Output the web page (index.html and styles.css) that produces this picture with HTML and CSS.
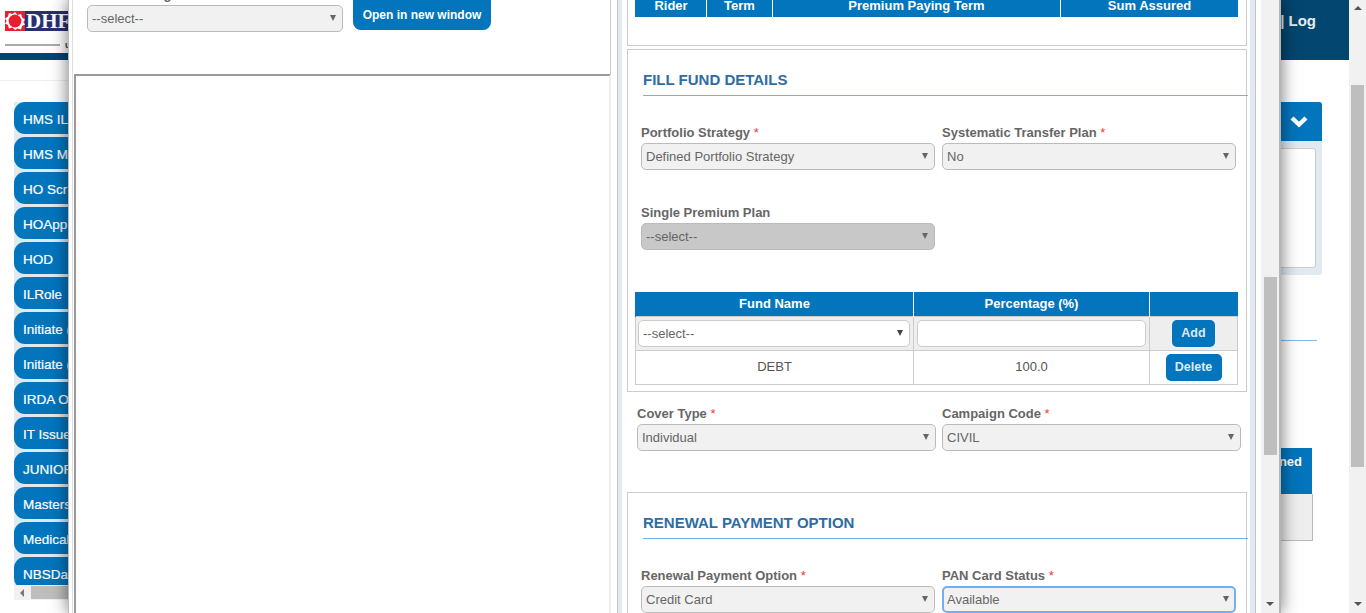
FILE: index.html
```html
<!DOCTYPE html>
<html lang="en">
<head>
    <meta charset="UTF-8">
    <title>Proposal Entry</title>
    <link rel="stylesheet" href="styles.css">
</head>
<body>

<div class="page">
    <div class="page-main">
        <div class="header">
            <div class="logo-block">
                <div class="logo">
                    <svg class="logo-mark" width="20" height="20" viewBox="0 0 20 20">
                        <rect width="20" height="20" fill="#e8202e"/>
                        <path d="M10 1l2.5 2.9 3.6-1 .9 3.6 3 1.9-1.7 2.6 1.7 2.6-3 1.4-.9 3.6-3.6-1L10 19l-2.5-2.4-3.6 1-.9-3.6-3-1.4L1.7 10 0 7.4l3-1.9.9-3.6 3.6 1z" fill="#fff"/>
                        <circle cx="10" cy="10" r="6.4" fill="#e8202e"/>
                    </svg>
                    <span class="logo-text">DHFL</span>
                </div>
                <div class="logo-tag">
                    <span class="logo-line"></span>
                    <span class="logo-word">u</span>
                </div>
            </div>
            <div class="header-user">| Log</div>
        </div>
        <div class="content">
            <div class="sidebar">
                <div class="role-list">
                    <a class="role">HMS IL</a>
                    <a class="role">HMS M</a>
                    <a class="role">HO Scr</a>
                    <a class="role">HOApp</a>
                    <a class="role">HOD</a>
                    <a class="role">ILRole</a>
                    <a class="role">Initiate (</a>
                    <a class="role">Initiate (</a>
                    <a class="role">IRDA O</a>
                    <a class="role">IT Issue</a>
                    <a class="role">JUNIOR</a>
                    <a class="role">Masters</a>
                    <a class="role">Medical</a>
                    <a class="role">NBSDa</a>
                </div>
                <div class="hscroll">
                    <span class="arrow arrow-left"></span>
                    <span class="hscroll-thumb"></span>
                </div>
            </div>
            <div class="aside">
                <div class="box">
                    <div class="box-head">
                        <svg width="18" height="13" viewBox="0 0 18 13"><path d="M2 3l7 6.5L16 3" fill="none" stroke="#fff" stroke-width="4.4"/></svg>
                    </div>
                    <div class="box-body"><div class="box-text"></div></div>
                </div>
                <div class="aside-line"></div>
                <div class="aside-table">
                    <div class="aside-th">Assigned</div>
                    <div class="aside-td"></div>
                </div>
            </div>
        </div>
    </div>
    <div class="vscroll">
        <span class="arrow arrow-up"></span>
        <span class="vscroll-thumb page-thumb"></span>
        <span class="arrow arrow-down"></span>
    </div>
</div>

<div class="modal">
    <div class="doc-pane">
        <div class="doc-top">
            <div class="doc-field">
                <label class="doc-label">Select Listing</label>
                <div class="select-wrap doc-select">
                    <select><option>--select--</option></select>
                </div>
            </div>
            <button class="btn btn-open">Open in new window</button>
        </div>
        <div class="doc-frame"></div>
    </div>

    <div class="form-pane">
        <div class="form-scroll">
            <div class="panel panel-rider">
                <table class="grid rider-grid">
                    <tr>
                        <th class="col-rider">Rider</th>
                        <th class="col-term">Term</th>
                        <th class="col-ppt">Premium Paying Term</th>
                        <th>Sum Assured</th>
                    </tr>
                </table>
            </div>

            <div class="panel panel-fund">
                <h3 class="section-title">FILL FUND DETAILS</h3>
                <div class="form-row first-row">
                    <div class="field">
                        <label>Portfolio Strategy <span class="req">*</span></label>
                        <div class="select-wrap"><select><option>Defined Portfolio Strategy</option></select></div>
                    </div>
                    <div class="field">
                        <label>Systematic Transfer Plan <span class="req">*</span></label>
                        <div class="select-wrap"><select><option>No</option></select></div>
                    </div>
                </div>
                <div class="form-row second-row">
                    <div class="field">
                        <label>Single Premium Plan</label>
                        <div class="select-wrap disabled"><select disabled><option>--select--</option></select></div>
                    </div>
                </div>
                <table class="grid fund-grid">
                    <tr>
                        <th class="col-name">Fund Name</th>
                        <th class="col-pct">Percentage (%)</th>
                        <th></th>
                    </tr>
                    <tr class="entry-row">
                        <td><div class="select-wrap white"><select><option>--select--</option></select></div></td>
                        <td><input type="text" class="pct-input"></td>
                        <td><button class="btn btn-add">Add</button></td>
                    </tr>
                    <tr class="data-row">
                        <td>DEBT</td>
                        <td>100.0</td>
                        <td><button class="btn btn-delete">Delete</button></td>
                    </tr>
                </table>
            </div>

            <div class="form-row cover-row">
                <div class="field">
                    <label>Cover Type <span class="req">*</span></label>
                    <div class="select-wrap"><select><option>Individual</option></select></div>
                </div>
                <div class="field">
                    <label>Campaign Code <span class="req">*</span></label>
                    <div class="select-wrap"><select><option>CIVIL</option></select></div>
                </div>
            </div>

            <div class="panel panel-renewal">
                <h3 class="section-title">RENEWAL PAYMENT OPTION</h3>
                <div class="form-row first-row">
                    <div class="field">
                        <label>Renewal Payment Option <span class="req">*</span></label>
                        <div class="select-wrap"><select><option>Credit Card</option></select></div>
                    </div>
                    <div class="field">
                        <label>PAN Card Status <span class="req">*</span></label>
                        <div class="select-wrap focused"><select><option>Available</option></select></div>
                    </div>
                </div>
            </div>
        </div>
    </div>

    <div class="vscroll modal-scroll">
        <span class="vscroll-thumb modal-thumb"></span>
        <span class="arrow arrow-down"></span>
    </div>
</div>

</body>
</html>
```

FILE: styles.css
```css
* {
    box-sizing: border-box;
}
html, body {
    margin: 0;
    padding: 0;
    height: 613px;
    overflow: hidden;
}
body {
    font-family: "Liberation Sans", Arial, sans-serif;
    font-size: 13px;
    color: #666;
    background-color: #fff;
}

/* page behind the modal */
.page {
    display: flex;
    height: 613px;
}
.page-main {
    flex: 1;
    min-width: 0;
}
.header {
    display: flex;
    justify-content: space-between;
    height: 60px;
    background-color: #03466f;
}
.logo-block {
    width: 300px;
    height: 53px;
    background-color: #fff;
    padding: 11px 0 0 5px;
}
.logo {
    display: flex;
    height: 20px;
}
.logo-text {
    background-color: #27306f;
    color: #fff;
    font-family: "Liberation Serif", serif;
    font-weight: bold;
    font-size: 21px;
    line-height: 21px;
    padding-left: 1px;
    width: 80px;
}
.logo-tag {
    display: flex;
    align-items: center;
    gap: 5px;
    height: 10px;
    margin-top: 9px;
    color: #444;
    font-size: 9px;
    font-weight: bold;
}
.logo-line {
    width: 55px;
    height: 2px;
    background-color: #aaa;
}
.header-user {
    padding: 12px 33px 0 0;
    color: #e6eef4;
    font-size: 15px;
    font-weight: bold;
}
.content {
    display: flex;
    justify-content: space-between;
    height: 553px;
    position: relative;
}
.sidebar {
    width: 300px;
    height: 541px;
    margin-top: 20px;
    padding: 21px 0 0 14px;
    border-top: 1px solid #eee;
}
.role-list {
    display: flex;
    flex-direction: column;
    gap: 3px;
    height: 483px;
    overflow: hidden;
    background-color: #e1e9f1;
}
.role {
    flex: none;
    height: 32px;
    padding-left: 9px;
    line-height: 35px;
    color: #fff;
    font-size: 13.5px;
    -webkit-text-stroke: 0.2px #fff;
    background-color: #0275bd;
    border-radius: 11px;
}
.hscroll {
    display: flex;
    align-items: center;
    height: 15px;
    background-color: #f1f1f1;
}
.hscroll-thumb {
    width: 200px;
    height: 13px;
    margin-left: 7px;
    background-color: #bebebe;
}
.arrow {
    display: block;
    width: 0;
    height: 0;
    border-style: solid;
    border-color: transparent;
}
.arrow-left {
    margin-left: 6px;
    border-width: 4px 4px 4px 0;
    border-right-color: #777;
}
.arrow-up {
    margin-top: 6px;
    border-width: 0 4px 4px;
    border-bottom-color: #555;
}
.arrow-down {
    margin-top: auto;
    margin-bottom: 7px;
    border-width: 4px 4px 0;
    border-top-color: #555;
}
.aside {
    width: 250px;
    margin-right: 27px;
    padding-top: 42px;
}
.box {
    height: 173px;
    border-radius: 3px;
    background-color: #e1e9f1;
}
.box-head {
    display: flex;
    justify-content: flex-end;
    align-items: center;
    height: 39px;
    padding-right: 14px;
    background-color: #0275bd;
    border-radius: 3px 3px 0 0;
}
.box-body {
    padding: 7px 6px 7px 0;
}
.box-text {
    height: 120px;
    background-color: #fff;
    border: 1px solid #ccc;
    border-radius: 3px;
}
.aside-line {
    height: 1px;
    margin: 65px 5px 0 0;
    background-color: #7dbbee;
}
.aside-table {
    margin: 107px 10px 0 0;
}
.aside-th {
    height: 46px;
    padding: 6px 10px 0 0;
    color: #fff;
    font-weight: bold;
    text-align: right;
    background-color: #0275bd;
}
.aside-td {
    height: 47px;
    margin-right: -1px;
    background-color: #eee;
    border-right: 1px solid #bbb;
    border-bottom: 1px solid #bbb;
}
.vscroll {
    display: flex;
    flex-direction: column;
    align-items: center;
    flex: none;
    width: 17px;
    height: 613px;
    background-color: #f1f1f1;
}
.vscroll-thumb {
    display: block;
    width: 13px;
    background-color: #bebebe;
}
.page-thumb {
    height: 382px;
    margin-top: 75px;
}

/* modal */
.modal {
    position: absolute;
    top: 0;
    left: 68px;
    display: flex;
    width: 1213px;
    height: 613px;
    padding-left: 3px;
    background-color: #fff;
    border-left: 1px solid #bbb;
    border-right: 2px solid #b5b5b5;
    box-shadow: 0 0 16px rgba(0, 0, 0, 0.55);
}
.doc-pane {
    flex: none;
    width: 539px;
    border-left: 1px solid #ddd;
    border-right: 1px solid #ccc;
}
.doc-top {
    display: flex;
    align-items: flex-start;
    gap: 10px;
    height: 74px;
    padding-left: 14px;
}
.doc-field {
    width: 256px;
    padding-top: 5px;
    position: relative;
}
.doc-label {
    position: absolute;
    top: -13px;
    left: 0;
    font-weight: bold;
}
.doc-select select {
    height: 28px;
    padding-left: 3px;
    font-size: 14.5px;
}
.btn {
    display: block;
    padding: 0;
    color: #fff;
    font-family: "Liberation Sans", Arial, sans-serif;
    font-size: 12px;
    font-weight: bold;
    background-color: #0275bd;
    border: none;
    border-radius: 5px;
}
.btn-open {
    width: 138px;
    height: 38px;
    margin-top: -8px;
    padding-top: 7px;
    border-radius: 8px;
}
.doc-frame {
    height: 539px;
    margin-left: 1px;
    margin-right: -1px;
    border-top: 2px solid #999;
    border-left: 2px solid #999;
    border-right: 2px solid #eee;
}
.form-pane {
    flex: none;
    width: 639px;
    height: 613px;
    margin-left: 6px;
    overflow: hidden;
    border-left: 1px solid #c4c4c4;
    border-right: 1px solid #c4c4c4;
    background-color: #e1e9f1;
    padding: 0 5px 0 4px;
}
.form-scroll {
    display: flow-root;
    height: 613px;
    padding-left: 5px;
    background-color: #fff;
}
.modal-scroll {
    width: 18px;
    margin-left: 5px;
}
.modal-thumb {
    height: 178px;
    margin-top: 277px;
}
.panel {
    width: 620px;
    border: 1px solid #ccc;
}
.panel-rider {
    height: 76px;
    margin-top: -30px;
    padding: 22px 0 0 7px;
}
.panel-fund {
    height: 343px;
    margin-top: 3px;
    padding-left: 7px;
}
.panel-renewal {
    height: 200px;
    margin-top: 41px;
}
.section-title {
    width: 605px;
    margin: 0 -1px 0 8px;
    color: #2e6da4;
    font-size: 15px;
    line-height: 16px;
    padding-bottom: 7px;
    padding-top: 22px;
    font-weight: bold;
    border-bottom: 1px solid #7aaedb;
}
.panel-renewal .section-title {
    border-bottom-color: #68b0f0;
    margin-left: 15px;
}
.form-row {
    display: grid;
    grid-template-columns: 294px 294px;
    column-gap: 7px;
}
.first-row {
    margin: 29px 0 0 6px;
}
.panel-renewal .first-row {
    margin-left: 13px;
}
.second-row {
    margin: 35px 0 0 6px;
}
.cover-row {
    grid-template-columns: 299px 299px;
    column-gap: 6px;
    margin: 14px 0 0 10px;
}
.field label {
    display: block;
    height: 15px;
    margin-bottom: 3px;
    line-height: 15px;
    font-weight: bold;
    font-size: 13px;
    color: #666;
}
.req {
    color: #e8403c;
    font-weight: normal;
}
.select-wrap {
    position: relative;
}
.select-wrap::after {
    content: "";
    position: absolute;
    top: 10px;
    right: 7px;
    border-style: solid;
    border-width: 6px 3.5px 0;
    border-color: #666 transparent transparent;
}
.select-wrap select {
    display: block;
    width: 100%;
    height: 27px;
    padding: 0 20px 0 4px;
    color: #666;
    font-family: "Liberation Sans", Arial, sans-serif;
    font-size: 13px;
    background-color: #f1f1f1;
    border: 1px solid #bbb;
    border-radius: 5px;
    appearance: none;
    opacity: 1;
}
.select-wrap.disabled select {
    background-color: #c8c8c8;
}
.select-wrap.white select {
    background-color: #fff;
    border-color: #ccc;
}
.select-wrap.white::after {
    border-top-color: #444;
}
.select-wrap.focused select {
    border: 2px solid #74aef5;
    padding-left: 3px;
}
.grid {
    table-layout: fixed;
    width: 603px;
    border-collapse: collapse;
}
.grid th {
    height: 24px;
    padding: 0;
    color: #fff;
    font-size: 13px;
    font-weight: bold;
    text-align: center;
    background-color: #0275bd;
    border-left: 1px solid #fff;
}
.grid th:first-child {
    border-left: 1px solid #0275bd;
}
.col-rider {
    width: 71px;
}
.col-term {
    width: 66px;
}
.col-ppt {
    width: 288px;
}
.col-name {
    width: 278px;
}
.col-pct {
    width: 236px;
}
.fund-grid {
    margin-top: 42px;
}
.fund-grid td {
    padding: 0;
    text-align: center;
    font-size: 13px;
    color: #555;
    border: 1px solid #ccc;
}
.entry-row td {
    height: 34px;
    padding: 0 3px;
    background-color: #eee;
}
.entry-row td:first-child {
    padding-left: 2px;
}
.data-row td {
    height: 34px;
    padding-bottom: 2px;
}
.data-row td:last-child {
    padding-bottom: 0;
}
.pct-input {
    display: block;
    width: 229px;
    height: 27px;
    background-color: #fff;
    border: 1px solid #ccc;
    border-radius: 5px;
}
.btn-add {
    width: 43px;
    height: 27px;
    margin: 0 auto;
    font-size: 12.5px;
    color: #dfe9f2;
}
.btn-delete {
    width: 56px;
    height: 27px;
    margin: 0 auto;
    font-size: 12.5px;
    color: #dfe9f2;
}
```
